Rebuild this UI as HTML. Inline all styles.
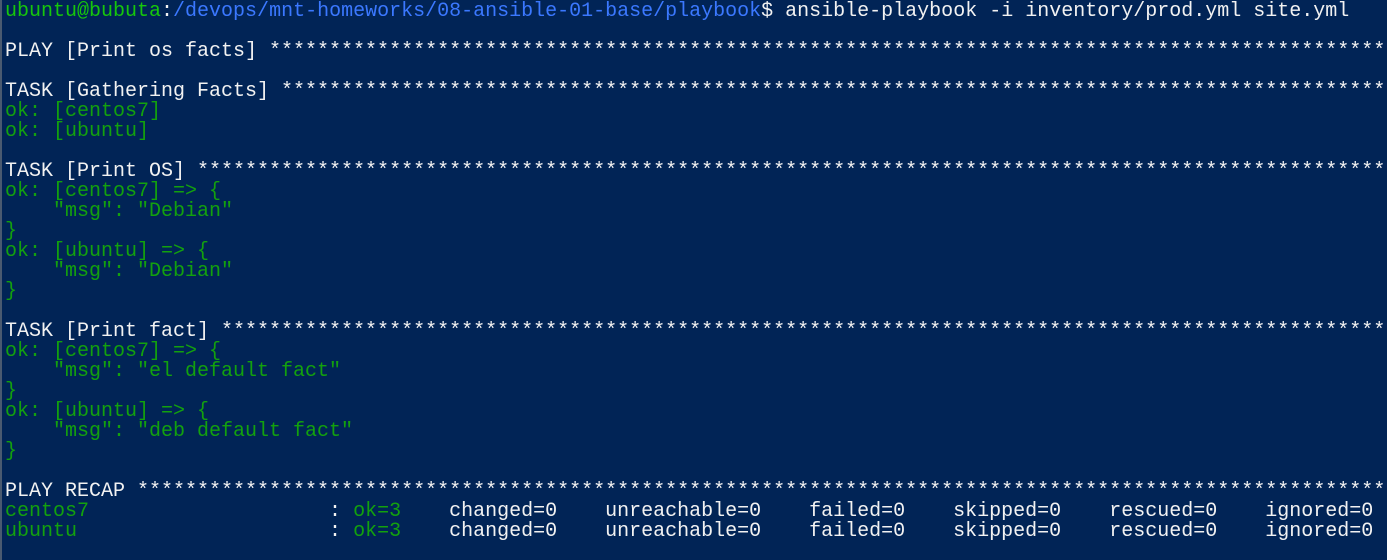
<!DOCTYPE html>
<html><head><meta charset="utf-8"><style>
html,body{margin:0;padding:0;background:#012456;width:1387px;height:560px;overflow:hidden}
.bar{position:absolute;left:0;top:0;width:2px;height:560px;background:#4a5a70}
pre{position:absolute;left:5px;top:2px;margin:0;font-family:"Liberation Mono",monospace;font-size:20px;line-height:20px;color:#f2f2f2;white-space:pre}
.g{color:#13a10e}.G{color:#16c60c}.b{color:#3b78ff}
</style></head><body><div class="bar"></div>
<pre><span class="G">ubuntu@bubuta</span>:<span class="b">/devops/mnt-homeworks/08-ansible-01-base/playbook</span>$ ansible-playbook -i inventory/prod.yml site.yml

PLAY [Print os facts] **********************************************************************************************

TASK [Gathering Facts] *********************************************************************************************
<span class="g">ok: [centos7]
ok: [ubuntu]</span>

TASK [Print OS] ****************************************************************************************************
<span class="g">ok: [centos7] =&gt; {
    "msg": "Debian"
}
ok: [ubuntu] =&gt; {
    "msg": "Debian"
}</span>

TASK [Print fact] **************************************************************************************************
<span class="g">ok: [centos7] =&gt; {
    "msg": "el default fact"
}
ok: [ubuntu] =&gt; {
    "msg": "deb default fact"
}</span>

PLAY RECAP *********************************************************************************************************
<span class="g">centos7</span>                    : <span class="g">ok=3</span>    changed=0    unreachable=0    failed=0    skipped=0    rescued=0    ignored=0
<span class="g">ubuntu</span>                     : <span class="g">ok=3</span>    changed=0    unreachable=0    failed=0    skipped=0    rescued=0    ignored=0
</pre></body></html>
